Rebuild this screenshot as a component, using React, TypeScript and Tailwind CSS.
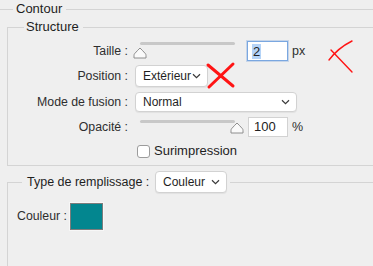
import { ReactNode } from 'react';

const line = 'h-px bg-[#d4d4d4]';

function Chevron() {
  return (
    <svg width="9" height="6" viewBox="0 0 9 6" className="shrink-0">
      <path d="M1 1.2 L4.5 4.6 L8 1.2" fill="none" stroke="#3a3a3a" strokeWidth="1.2" />
    </svg>
  );
}

function Select({ value, className }: { value: string; className: string }) {
  return (
    <div
      className={`flex items-center justify-between rounded-[4px] border border-[#d2d2d2] bg-white pl-[7px] pr-[6px] text-[12px] text-[#1f1f1f] shadow-[0_1px_1px_rgba(0,0,0,0.06)] ${className}`}
    >
      <span>{value}</span>
      <Chevron />
    </div>
  );
}

function Thumb() {
  return (
    <svg width="14" height="12" viewBox="0 0 14 12">
      <path
        d="M7 1 C5.5 2.5 3 5 1.5 6.8 C1 7.4 1 8 1 8.6 L1 11 L13 11 L13 8.6 C13 8 13 7.4 12.5 6.8 C11 5 8.5 2.5 7 1 Z"
        fill="#fafafa"
        stroke="#8e8e8e"
        strokeWidth="1"
      />
    </svg>
  );
}

function Slider({ thumbLeft, trackTop, thumbTop }: { thumbLeft: string; trackTop: string; thumbTop: string }) {
  return (
    <div className="relative ml-[5px] h-full w-[104px]">
      <div className={`absolute left-[7px] right-[2px] h-[3px] rounded-full bg-[#c8c8c8] ${trackTop}`} />
      <div className={`absolute ${thumbLeft} ${thumbTop}`}>
        <Thumb />
      </div>
    </div>
  );
}

function Row({ label, height, children }: { label: string; height: string; children?: ReactNode }) {
  return (
    <div className={`mt-[2px] flex items-center ${height}`}>
      <div className="w-[120px] shrink-0 text-right text-[12.3px] text-[#2e2e2e]">{label}</div>
      {children}
    </div>
  );
}

export default function App() {
  return (
    <div
      className="relative flex h-[266px] w-[373px] flex-col overflow-hidden bg-[#efefef] text-[#222]"
      style={{ fontFamily: '"Liberation Sans", Arial, sans-serif' }}
    >
      {/* Contour */}
      <div className="flex h-[18px] items-center">
        <div className={`${line} w-[13px]`} />
        <span className="ml-[3px] text-[13px] text-[#1e1e1e]">Contour</span>
        <div className={`${line} ml-[4px] flex-1`} />
      </div>

      {/* Structure */}
      <div className="ml-[7px] mt-[9px] flex h-[139px] flex-col border-b border-l border-[#d4d4d4]">
        <div className="-mt-[9px] flex h-[18px] items-center">
          <div className={`${line} w-[16px]`} />
          <span className="ml-[2px] text-[13px] text-[#1e1e1e]">Structure</span>
          <div className={`${line} ml-[4px] flex-1`} />
        </div>

        <div className="mt-[4px] flex h-[22px] items-center">
          <div className="w-[120px] shrink-0 text-right text-[12.3px] text-[#2e2e2e]">Taille :</div>
          <Slider thumbLeft="left-0" trackTop="top-[2px]" thumbTop="top-[7px]" />
          <div className="ml-[10px] flex h-[20px] w-[41px] items-center border border-[#7aa7e0] bg-white pl-[4px] text-[13px] shadow-[0_0_0_1px_rgba(122,167,224,0.35)]">
            <span className="bg-[#b5d3f7] px-px leading-[15px]">2</span>
          </div>
          <span className="ml-[4px] text-[12.5px] text-[#2e2e2e]">px</span>
        </div>

        <Row label="Position :" height="h-[24px]">
          <Select value="Extérieur" className="ml-[7px] h-[22px] w-[73px]" />
        </Row>

        <Row label="Mode de fusion :" height="h-[24px]">
          <Select value="Normal" className="ml-[7px] h-[20px] w-[162px]" />
        </Row>

        <Row label="Opacité :" height="h-[22px]">
          <Slider thumbLeft="left-[97px]" trackTop="top-[4px]" thumbTop="top-[6px]" />
          <div className="ml-[11px] flex h-[20px] w-[40px] items-center border border-[#d2d2d2] bg-white pl-[5px] text-[13px]">
            100
          </div>
          <span className="ml-[4px] text-[12.5px] text-[#2e2e2e]">%</span>
        </Row>

        <div className="mt-[2px] flex h-[22px] items-center pl-[129px]">
          <div className="h-[13px] w-[13px] rounded-[3px] border border-[#9c9c9c] bg-white" />
          <span className="ml-[4px] text-[13px] text-[#1e1e1e]">Surimpression</span>
        </div>
      </div>

      {/* Type de remplissage */}
      <div className="ml-[7px] mt-[16px] flex flex-1 flex-col border-l border-[#d4d4d4]">
        <div className="-mt-[11px] flex h-[22px] items-center">
          <div className={`${line} w-[14px]`} />
          <span className="ml-[5px] w-[124px] text-[12.5px] text-[#1e1e1e]">Type de remplissage :</span>
          <Select value="Couleur" className="ml-[4px] h-[22px] w-[72px]" />
          <div className={`${line} ml-[3px] flex-1`} />
        </div>

        <div className="mt-[9px] flex items-center">
          <span className="ml-[9px] text-[12.3px] text-[#2e2e2e]">Couleur :</span>
          <div className="ml-[2px] h-[29px] w-[35px] border border-[#f7f7f7] bg-[#7c7c7c] p-px">
            <div className="h-full w-full bg-[#03868f]" />
          </div>
        </div>
      </div>

      {/* red annotations */}
      <svg className="pointer-events-none absolute left-0 top-0" width="373" height="266">
        <path d="M208 65 L233 86 M233 64 L209 87" stroke="#ff1414" strokeWidth="3" strokeLinecap="round" fill="none" />
        <path d="M352 41 Q338 48 329 60 M331 50 L352 72" stroke="#ff1414" strokeWidth="1.4" strokeLinecap="round" fill="none" />
      </svg>
    </div>
  );
}
